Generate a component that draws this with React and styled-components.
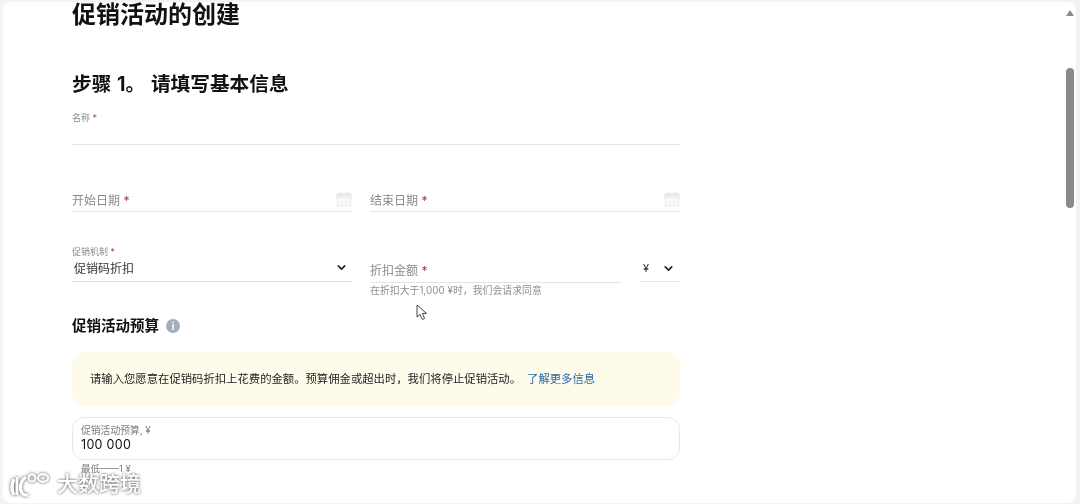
import styled, { createGlobalStyle } from "styled-components";
import { ChevronDown } from "lucide-react";

const CJK = `Inter, "Noto Sans CJK SC", sans-serif`;

const Global = createGlobalStyle`
  html, body {
    margin: 0;
    height: 504px;
    overflow: hidden;
    background: #f3f3f3;
  }
  * { box-sizing: border-box; }
`;

const Calendar = () => (
  <svg width="16" height="16" viewBox="0 0 16 16">
    <rect x="0.5" y="2" width="15" height="14" rx="1.5" fill="#f1f2f2" />
    <rect x="0.5" y="2" width="15" height="3.5" rx="1" fill="#e8eaea" />
    <rect x="3.5" y="0.5" width="1.4" height="3" fill="#e6e8e8" />
    <rect x="11" y="0.5" width="1.4" height="3" fill="#e6e8e8" />
    {[3, 6.7, 10.4].map((x) =>
      [7.5, 11].map((y) => (
        <rect key={`${x}-${y}`} x={x} y={y} width="2.4" height="2.2" fill="#fff" />
      ))
    )}
  </svg>
);

const App = () => {
  return (
    <Window>
      <Global />
      <Card>
        <Content>
          <PageTitle>促销活动的创建</PageTitle>
          <StepTitle>步骤 1。 请填写基本信息</StepTitle>
          <NameField>
            <TinyLabel>
              名称 <Star>*</Star>
            </TinyLabel>
          </NameField>
          <DateRow>
            <DateField>
              <Placeholder>
                开始日期 <Star>*</Star>
              </Placeholder>
              <Calendar />
            </DateField>
            <DateField>
              <Placeholder>
                结束日期 <Star>*</Star>
              </Placeholder>
              <Calendar />
            </DateField>
          </DateRow>
          <MechanismRow>
            <SelectField>
              <TinyLabel>
                促销机制 <Star>*</Star>
              </TinyLabel>
              <SelectValue>
                <span>促销码折扣</span>
                <ChevronDown size={13} strokeWidth={3} color="#222" />
              </SelectValue>
            </SelectField>
            <AmountColumn>
              <AmountRow>
                <AmountField>
                  <Placeholder>
                    折扣金额 <Star>*</Star>
                  </Placeholder>
                </AmountField>
                <Currency>
                  <span>¥</span>
                  <ChevronDown size={13} strokeWidth={3} color="#222" />
                </Currency>
              </AmountRow>
              <Hint>在折扣大于1,000 ¥时，我们会请求同意</Hint>
            </AmountColumn>
          </MechanismRow>
          <BudgetTitle>
            促销活动预算
            <InfoDot>i</InfoDot>
          </BudgetTitle>
          <Notice>
            请输入您愿意在促销码折扣上花费的金额。预算佣金或超出时，我们将停止促销活动。
            <NoticeLink>了解更多信息</NoticeLink>
          </Notice>
          <BudgetField>
            <BudgetLabel>促销活动预算, ¥</BudgetLabel>
            <BudgetValue>100 000</BudgetValue>
          </BudgetField>
          <MinText>最低——1 ¥</MinText>
        </Content>
        <ScrollTrack>
          <ArrowUp />
          <Thumb />
        </ScrollTrack>
      </Card>
      <Cursor width="13" height="17" viewBox="0 0 13 17">
        <path
          d="M1 1 L1 13 L4 10.5 L6.3 15.5 L8.6 14.4 L6.4 9.6 L10.5 9.4 Z"
          fill="#fff"
          stroke="#333"
          strokeWidth="0.9"
        />
      </Cursor>
      <Watermark>
        <svg width="42" height="28" viewBox="0 0 42 28" fill="none" stroke="#fff" strokeWidth="2.2">
          <path d="M6 9 C3.5 14 3.5 20 6 25" strokeWidth="3.4" />
          <path d="M9 7 V25" strokeWidth="3" />
          <path d="M18 7 C12 11 11 19 14 23 C15.5 25 17.5 25.5 20 25" strokeWidth="3.2" />
          <circle cx="24" cy="8" r="3.6" />
          <ellipse cx="35" cy="8" rx="5" ry="3.8" />
        </svg>
        <WatermarkText>大数跨境</WatermarkText>
      </Watermark>
    </Window>
  );
};

const Window = styled.div`
  position: relative;
  height: 504px;
  padding: 2px 4px 1px 3px;
  font-family: ${CJK};
  filter: blur(0.3px);
`;

const Card = styled.main`
  display: flex;
  justify-content: space-between;
  height: 501px;
  background: #fff;
  border-radius: 8px;
`;

const Content = styled.div`
  width: 677px;
  padding-left: 69px;
`;

const PageTitle = styled.h1`
  margin: 0;
  height: 28px;
  font-size: 24px;
  line-height: 25px;
  font-weight: 700;
  color: #111;
`;

const StepTitle = styled.h2`
  margin: 40px 0 0;
  height: 28px;
  font-size: 19.7px;
  line-height: 28px;
  font-weight: 700;
  word-spacing: 1px;
  color: #111;
`;

const NameField = styled.div`
  height: 46px;
  margin-top: 1px;
  padding-top: 13px;
  border-bottom: 1px solid #e4e4e4;
`;

const TinyLabel = styled.div`
  font-size: 9px;
  line-height: 12px;
  color: #8d8d8d;
`;

const Star = styled.span`
  color: #a83a50;
`;

const DateRow = styled.div`
  display: grid;
  grid-template-columns: 280px 310px;
  column-gap: 18px;
  margin-top: 43px;
`;

const DateField = styled.div`
  display: flex;
  justify-content: space-between;
  align-items: center;
  height: 24px;
  border-bottom: 1px solid #e4e4e4;
  padding-bottom: 1px;
`;

const Placeholder = styled.span`
  font-size: 12px;
  color: #8a8a8a;
`;

const MechanismRow = styled.div`
  display: grid;
  grid-template-columns: 280px 310px;
  column-gap: 18px;
  margin-top: 33px;
`;

const SelectField = styled.div`
  height: 37px;
  padding-top: 1px;
  border-bottom: 1px solid #d9d9d9;
`;

const SelectValue = styled.div`
  display: flex;
  justify-content: space-between;
  align-items: center;
  padding: 0 4px 0 2px;
  height: 19px;
  font-size: 12px;
  color: #333;
`;

const AmountColumn = styled.div`
  display: flex;
  flex-direction: column;
`;

const AmountRow = styled.div`
  display: flex;
  justify-content: space-between;
  align-items: flex-end;
`;

const AmountField = styled.div`
  display: flex;
  align-items: center;
  width: 251px;
  height: 36px;
  padding-top: 10px;
  border-bottom: 1px solid #e4e4e4;
`;

const Currency = styled.div`
  display: flex;
  justify-content: space-between;
  align-items: center;
  width: 40px;
  height: 37px;
  margin-bottom: 1px;
  padding: 10px 5px 0 3px;
  border-bottom: 1px solid #e4e4e4;
  font-size: 11px;
  color: #333;
`;

const Hint = styled.div`
  margin-top: 1px;
  font-size: 9.9px;
  line-height: 12px;
  color: #8f8f8f;
`;

const BudgetTitle = styled.h3`
  display: flex;
  align-items: center;
  gap: 7px;
  margin: 20px 0 0;
  height: 20px;
  font-size: 14.5px;
  line-height: 20px;
  font-weight: 700;
  color: #111;
`;

const InfoDot = styled.span`
  display: inline-flex;
  justify-content: center;
  align-items: center;
  width: 14px;
  height: 14px;
  border-radius: 50%;
  background: #a3afbd;
  color: #fff;
  font-size: 10px;
  font-weight: 700;
`;

const Notice = styled.div`
  display: flex;
  align-items: center;
  gap: 6px;
  width: 608px;
  height: 54px;
  margin-top: 16px;
  padding: 0 0 3px 18px;
  background: #fffbea;
  border-radius: 12px;
  font-size: 11.35px;
  color: #222;
`;

const NoticeLink = styled.span`
  color: #2a6aa8;
`;

const BudgetField = styled.div`
  width: 608px;
  height: 43px;
  margin-top: 11px;
  padding: 7px 8px 0;
  border: 1px solid #e9e9e9;
  border-radius: 12px;
`;

const BudgetLabel = styled.div`
  font-size: 9.8px;
  line-height: 12px;
  color: #7c7c7c;
`;

const BudgetValue = styled.div`
  font-size: 12.5px;
  line-height: 15px;
  letter-spacing: 0.3px;
  color: #111;
`;

const MinText = styled.div`
  margin-top: 3px;
  padding-left: 9px;
  font-size: 9.5px;
  line-height: 12px;
  color: #7c7c7c;
`;

const ScrollTrack = styled.div`
  display: flex;
  flex-direction: column;
  align-items: center;
  width: 10px;
  margin-right: 1px;
  padding-top: 8px;
`;

const ArrowUp = styled.div`
  width: 0;
  height: 0;
  border-left: 4px solid transparent;
  border-right: 4px solid transparent;
  border-bottom: 6px solid #8a8a8a;
`;

const Thumb = styled.div`
  width: 8px;
  height: 140px;
  margin-top: 52px;
  border-radius: 4px;
  background: #8a8a8a;
`;

const Cursor = styled.svg`
  position: absolute;
  left: 416px;
  top: 304px;
`;

const Watermark = styled.div`
  position: absolute;
  left: 8px;
  top: 470px;
  display: flex;
  align-items: center;
  gap: 7px;
  filter: drop-shadow(0 0 1.4px rgba(0, 0, 0, 0.7));
`;

const WatermarkText = styled.span`
  font-size: 21px;
  line-height: 28px;
  font-weight: 500;
  color: #fff;
`;

export default App;
